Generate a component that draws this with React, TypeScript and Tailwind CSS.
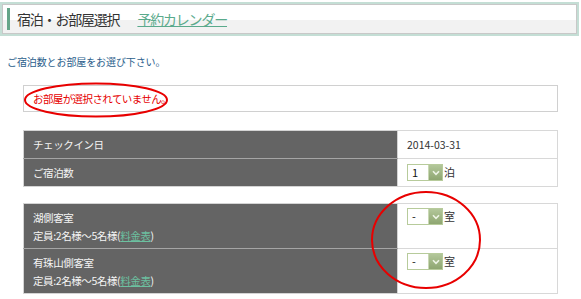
import React from "react";

function FakeSelect({ value }: { value: string }) {
  return (
    <div className="flex h-[17px] w-[36px] items-stretch border border-[#b7cb9b] bg-white">
      <span className="flex-1 pl-[4px] text-[11px] leading-[15px] text-[#111]">{value}</span>
      <span className="flex w-[14px] items-center justify-center bg-[linear-gradient(#b3c79a,#8ea671)] border-l border-[#c9d8b4]">
        <svg width="8" height="6" viewBox="0 0 8 6">
          <path d="M1 1.2 L4 4.3 L7 1.2" stroke="#eef4e6" strokeWidth="1.6" fill="none" />
        </svg>
      </span>
    </div>
  );
}

export default function App() {
  const font = "font-['Noto_Sans_CJK_JP','Noto_Sans',sans-serif]";
  return (
    <div className={`relative h-[299px] w-[581px] overflow-hidden bg-white ${font}`}>
      {/* header */}
      <div className="mt-[2px] h-[34px] w-[579px] border-2 border-[#c4ded5]">
        <div className="flex h-full items-center border border-[#c8c8c8] bg-[linear-gradient(#ffffff_0,#ffffff_55%,#f2f2f2_55%)]">
          <div className="ml-[4px] h-[22px] w-[3px] bg-[#64a588]" />
          <span className="ml-[7px] text-[14px] tracking-[-1.2px] text-[#333]">宿泊・お部屋選択</span>
          <a href="#" className="ml-[18px] text-[14px] tracking-[-1.2px] text-[#5aaa8c] underline">
            予約カレンダー
          </a>
        </div>
      </div>

      <p className="ml-[7px] mt-[19px] text-[10px] leading-[14px] tracking-[-0.1px] text-[#2b5e8c]">
        ご宿泊数とお部屋をお選び下さい。
      </p>

      <div className="ml-[23px] mt-[16px] flex h-[27px] w-[535px] items-center border border-[#d0d0d0] pl-[9px]">
        <span className="text-[10.5px] tracking-[-0.6px] text-[#e60000]">お部屋が選択されていません。</span>
      </div>

      <table className="ml-[23px] mt-[18px] w-[535px] border-collapse text-[10.5px] tracking-[-0.4px]">
        <tbody>
          <tr className="h-[28px]">
            <td className="w-[374px] border border-[#d4d4d4] border-b-[#a5a5a5] bg-[#646464] pl-[9px] text-[#f4f4f4]">チェックイン日</td>
            <td className="border border-[#d8d8d8] pl-[9px] text-[#333] tracking-normal">2014-03-31</td>
          </tr>
          <tr className="h-[28px]">
            <td className="border border-[#d4d4d4] border-t-[#a5a5a5] bg-[#646464] pl-[9px] text-[#f4f4f4]">ご宿泊数</td>
            <td className="border border-[#d8d8d8] pl-[9px] text-[#333]">
              <div className="flex items-center gap-[1px]">
                <FakeSelect value="1" />
                <span className="text-[11px]">泊</span>
              </div>
            </td>
          </tr>
        </tbody>
      </table>

      <table className="ml-[23px] mt-[16px] w-[535px] border-collapse text-[10.5px] tracking-[-0.4px]">
        <tbody>
          {["湖側客室", "有珠山側客室"].map((name, i) => (
            <tr key={i} className="h-[45px]">
              <td
                className={`w-[374px] border border-[#d4d4d4] bg-[#646464] pl-[9px] align-top text-[#f4f4f4] ${
                  i === 0 ? "border-b-[#a5a5a5]" : "border-t-[#a5a5a5]"
                }`}
              >
                <div className="pt-[5px] leading-[18px]">
                  <div>{name}</div>
                  <div>
                    定員:2名様〜5名様(
                    <a href="#" className="text-[#6cc0a0] underline">料金表</a>)
                  </div>
                </div>
              </td>
              <td className="border border-[#d8d8d8] pl-[9px] align-top text-[#333]">
                <div className="mt-[4px] flex items-center gap-[1px]">
                  <FakeSelect value="-" />
                  <span className="text-[11px]">室</span>
                </div>
              </td>
            </tr>
          ))}
        </tbody>
      </table>

      {/* red annotation marks */}
      <svg className="pointer-events-none absolute left-0 top-0" width="581" height="299">
        <ellipse cx="96" cy="100" rx="71" ry="16.5" fill="none" stroke="#e80000" strokeWidth="2" />
        <ellipse cx="426" cy="240" rx="54" ry="48" fill="none" stroke="#e80000" strokeWidth="2" />
      </svg>
    </div>
  );
}
